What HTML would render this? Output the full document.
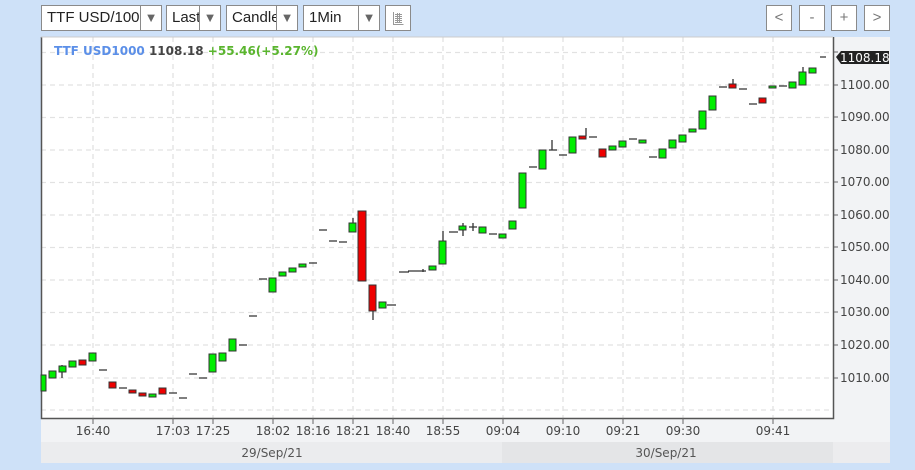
<!DOCTYPE html>
<html><head><meta charset="utf-8"><style>
body{margin:0;width:915px;height:470px;background:#cee1f8;font-family:"Liberation Sans",sans-serif;position:relative;overflow:hidden}
.sel{position:absolute;top:5px;height:26px;background:#fff;border:1px solid #8a8a8a;box-sizing:border-box;font-size:15px;color:#222;line-height:24px;padding-left:5px;overflow:hidden;white-space:nowrap}
.sel .ar{position:absolute;right:0;top:0;width:20px;height:24px;border-left:1px solid #8a8a8a;background:#fff;color:#666;font-size:13px;text-align:center;line-height:24px}
.btn{position:absolute;top:5px;width:26px;height:26px;background:#fff;border:1px solid #8a8a8a;box-sizing:border-box;text-align:center;line-height:23px;color:#777;font-size:15px}
svg text{font-family:"DejaVu Sans","Liberation Sans",sans-serif}
</style></head><body>
<div class="sel" style="left:41px;width:121px">TTF USD/1000<div class="ar">▼</div></div>
<div class="sel" style="left:166px;width:55px">Last<div class="ar">▼</div></div>
<div class="sel" style="left:226px;width:72px">Candle<div class="ar">▼</div></div>
<div class="sel" style="left:303px;width:77px">1Min<div class="ar">▼</div></div>
<div class="btn" style="left:385px"><svg style="position:absolute;left:0;top:0" width="24" height="24"><g stroke="#999" stroke-width="1" fill="none"><path d="M7.5 6v12.5h10M9 8.5h7M9 10.5h7M9 12.5h7M9 14.5h7M9 16.5h7M11.5 7v10M13.5 7v10"/></g></svg></div>
<div class="btn" style="left:766px">&lt;</div>
<div class="btn" style="left:799px">-</div>
<div class="btn" style="left:831px">+</div>
<div class="btn" style="left:864px">&gt;</div>
<svg style="position:absolute;left:0;top:0" width="915" height="470">
<rect x="41" y="37" width="849" height="426" fill="#f2f3f5"/>
<rect x="41" y="37" width="793" height="381" fill="#fff"/>
<rect x="41" y="442" width="461" height="21" fill="#ebecee"/>
<rect x="502" y="442" width="331" height="21" fill="#e4e5e7"/>
<rect x="833" y="442" width="57" height="21" fill="#ececee"/>
<g stroke="#e2e2e2" stroke-dasharray="5,4" stroke-width="1.3">
<path d="M41 52.5H833M41 85H833M41 117.5H833M41 150H833M41 182.5H833M41 215H833M41 247.5H833M41 280H833M41 312.5H833M41 345H833M41 378H833M41 410H833"/>
<path d="M93 37V418M173 37V418M213 37V418M273 37V418M313 37V418M353 37V418M393 37V418M443 37V418M503 37V418M563 37V418M623 37V418M683 37V418M773 37V418"/>
</g>
<path d="M41.5 37V418.5H833.5V37" fill="none" stroke="#555" stroke-width="1.5"/>
<path d="M41 37H833" stroke="#ccc"/>
<g stroke="#666"><path d="M93 418v6M173 418v6M213 418v6M273 418v6M313 418v6M353 418v6M393 418v6M443 418v6M503 418v6M563 418v6M623 418v6M683 418v6M773 418v6"/>
<path d="M834 52h4M834 85h4M834 117h4M834 150h4M834 182h4M834 215h4M834 247h4M834 280h4M834 312h4M834 345h4M834 378h4"/></g>
<g font-size="12" fill="#444">
<text x="93" y="435" text-anchor="middle">16:40</text><text x="173" y="435" text-anchor="middle">17:03</text><text x="213" y="435" text-anchor="middle">17:25</text><text x="273" y="435" text-anchor="middle">18:02</text><text x="313" y="435" text-anchor="middle">18:16</text><text x="353" y="435" text-anchor="middle">18:21</text><text x="393" y="435" text-anchor="middle">18:40</text><text x="443" y="435" text-anchor="middle">18:55</text><text x="503" y="435" text-anchor="middle">09:04</text><text x="563" y="435" text-anchor="middle">09:10</text><text x="623" y="435" text-anchor="middle">09:21</text><text x="683" y="435" text-anchor="middle">09:30</text><text x="773" y="435" text-anchor="middle">09:41</text>
<text x="272" y="457" text-anchor="middle" fill="#555">29/Sep/21</text><text x="666" y="457" text-anchor="middle" fill="#555">30/Sep/21</text>
<text x="840" y="89">1100.00</text><text x="840" y="121">1090.00</text><text x="840" y="154">1080.00</text><text x="840" y="186">1070.00</text><text x="840" y="219">1060.00</text><text x="840" y="251">1050.00</text><text x="840" y="284">1040.00</text><text x="840" y="316">1030.00</text><text x="840" y="349">1020.00</text><text x="840" y="382">1010.00</text>
</g>
<path d="M836 57l5-6h48v13h-48z" fill="#222"/>
<text x="840" y="62" font-size="12" fill="#fff">1108.18</text>
<text x="54" y="55" font-size="12" font-weight="bold" fill="#5b8fe8">TTF USD1000 <tspan fill="#444">1108.18</tspan> <tspan fill="#5ab52e">+55.46(+5.27%)</tspan></text>
<g stroke="#333" stroke-width="1.3">
<path d="M62 365v13M353 218v6M373 311v9M443 231v10M463 223v13M552 140v10M586 128v8M733 79v5M803 67v5M469 227h8M473 223v8M423 269v3"/>
<path d="M99 370h8M119 388h8M169 393h8M179 398h8M189 374h8M199 378h8M239 345h8M249 316h8M259 279h8M309 263h8M319 230h8M329 241h8M339 242h8M387 305h9M399 272h10M408 271h10M418 271h8M449 232h9M489 234h8M529 167h8M549 150h8M559 155h8M589 137h8M629 139h8M649 157h8M719 87h8M739 89h8M749 104h8M779 86h8M820 57h6"/>
</g>
<g stroke="#333" stroke-width="1" fill="#0e0">
<rect x="41" y="375" width="5" height="16"/><rect x="49" y="371" width="7" height="7"/><rect x="59" y="366" width="7" height="6"/><rect x="69" y="361" width="7" height="6"/><rect x="89" y="353" width="7" height="8"/><rect x="149" y="394" width="7" height="3"/><rect x="209" y="354" width="7" height="18"/><rect x="219" y="353" width="7" height="8"/><rect x="229" y="339" width="7" height="12"/><rect x="269" y="278" width="7" height="14"/><rect x="279" y="272" width="7" height="4"/><rect x="289" y="268" width="7" height="4"/><rect x="299" y="264" width="7" height="3"/><rect x="349" y="223" width="7" height="9"/><rect x="379" y="302" width="7" height="6"/><rect x="429" y="266" width="7" height="4"/><rect x="439" y="241" width="7" height="23"/><rect x="459" y="226" width="7" height="4"/><rect x="479" y="227" width="7" height="6"/><rect x="499" y="234" width="7" height="4"/><rect x="509" y="221" width="7" height="8"/><rect x="519" y="173" width="7" height="35"/><rect x="539" y="150" width="7" height="19"/><rect x="569" y="137" width="7" height="16"/><rect x="609" y="146" width="7" height="4"/><rect x="619" y="141" width="7" height="6"/><rect x="639" y="140" width="7" height="3"/><rect x="659" y="149" width="7" height="9"/><rect x="669" y="140" width="7" height="8"/><rect x="679" y="135" width="7" height="7"/><rect x="689" y="129" width="7" height="3"/><rect x="699" y="111" width="7" height="18"/><rect x="709" y="96" width="7" height="14"/><rect x="769" y="86" width="7" height="2"/><rect x="789" y="82" width="7" height="6"/><rect x="799" y="72" width="7" height="13"/><rect x="809" y="68" width="7" height="5"/>
</g>
<g stroke="#333" stroke-width="1" fill="#e00">
<rect x="79" y="360" width="7" height="5"/><rect x="109" y="382" width="7" height="6"/><rect x="129" y="390" width="7" height="3"/><rect x="139" y="393" width="7" height="3"/><rect x="159" y="388" width="7" height="6"/><rect x="358" y="211" width="8" height="70"/><rect x="369" y="285" width="7" height="26"/><rect x="579" y="136" width="7" height="3"/><rect x="599" y="149" width="7" height="8"/><rect x="729" y="84" width="7" height="4"/><rect x="759" y="98" width="7" height="5"/>
</g>
</svg>
</body></html>
